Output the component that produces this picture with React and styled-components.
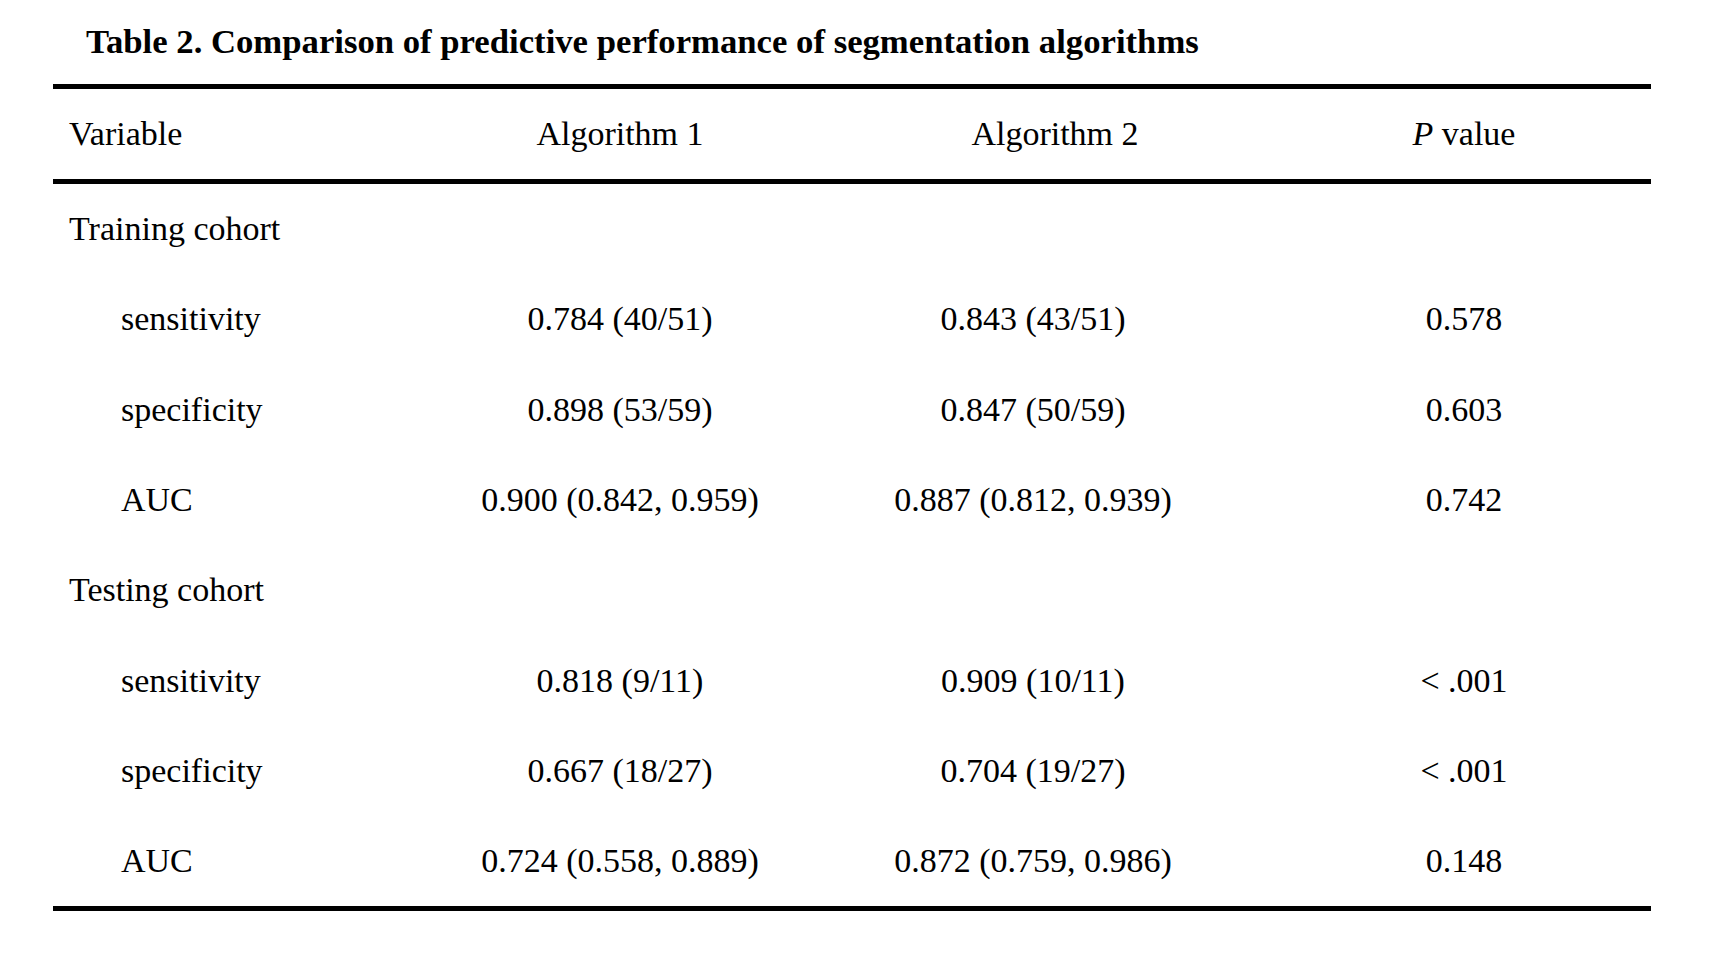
import React from 'react';
import styled, { createGlobalStyle } from 'styled-components';

const GlobalStyle = createGlobalStyle`
  html, body {
    margin: 0;
    padding: 0;
    background: #fff;
  }
  body {
    font-family: "Liberation Serif", "Times New Roman", serif;
    color: #000;
  }
`;

const rows = [
  { group: 'Training cohort' },
  { label: 'sensitivity', a1: '0.784 (40/51)', a2: '0.843 (43/51)', p: '0.578' },
  { label: 'specificity', a1: '0.898 (53/59)', a2: '0.847 (50/59)', p: '0.603' },
  { label: 'AUC', a1: '0.900 (0.842, 0.959)', a2: '0.887 (0.812, 0.939)', p: '0.742' },
  { group: 'Testing cohort' },
  { label: 'sensitivity', a1: '0.818 (9/11)', a2: '0.909 (10/11)', p: '< .001' },
  { label: 'specificity', a1: '0.667 (18/27)', a2: '0.704 (19/27)', p: '< .001' },
  { label: 'AUC', a1: '0.724 (0.558, 0.889)', a2: '0.872 (0.759, 0.986)', p: '0.148' },
];

const Page = styled.div`
  width: 1730px;
  height: 966px;
  padding: 22px 79px 0 53px;
  box-sizing: border-box;
`;

const Caption = styled.h2`
  margin: 0 0 22px 33px;
  font-size: 34.7px;
  font-weight: 700;
  line-height: 40px;
  white-space: nowrap;
`;

const Table = styled.div`
  display: grid;
  grid-template-columns: 398px 338px 488px 374px;
  border-top: 5px solid #000;
  border-bottom: 5px solid #000;
`;

const HeadRow = styled.div`
  display: contents;
`;

const HeadCell = styled.div`
  height: 90px;
  display: flex;
  align-items: center;
  justify-content: ${(p) => (p.$left ? 'flex-start' : 'center')};
  padding-left: ${(p) => p.$shift || 0}px;
  font-size: 34px;
  border-bottom: 5px solid #000;
  ${(p) => p.$left && 'padding-left: 16px;'}
`;

const Cell = styled.div`
  height: 90.3px;
  display: flex;
  align-items: center;
  justify-content: ${(p) => (p.$left ? 'flex-start' : 'center')};
  padding-left: ${(p) => p.$indent || 0}px;
  font-size: 34px;
  white-space: nowrap;
`;

const GroupCell = styled(Cell)`
  grid-column: 1 / -1;
`;

export default function App() {
  return (
    <>
      <GlobalStyle />
      <Page>
        <Caption>Table 2. Comparison of predictive performance of segmentation algorithms</Caption>
        <Table>
          <HeadRow>
            <HeadCell $left>Variable</HeadCell>
            <HeadCell>Algorithm 1</HeadCell>
            <HeadCell $shift={44}>Algorithm 2</HeadCell>
            <HeadCell>
              <span><i>P</i> value</span>
            </HeadCell>
          </HeadRow>
          {rows.map((r, i) =>
            r.group ? (
              <GroupCell key={i} $left $indent={16}>{r.group}</GroupCell>
            ) : (
              <React.Fragment key={i}>
                <Cell $left $indent={68}>{r.label}</Cell>
                <Cell>{r.a1}</Cell>
                <Cell>{r.a2}</Cell>
                <Cell>{r.p}</Cell>
              </React.Fragment>
            )
          )}
        </Table>
      </Page>
    </>
  );
}
